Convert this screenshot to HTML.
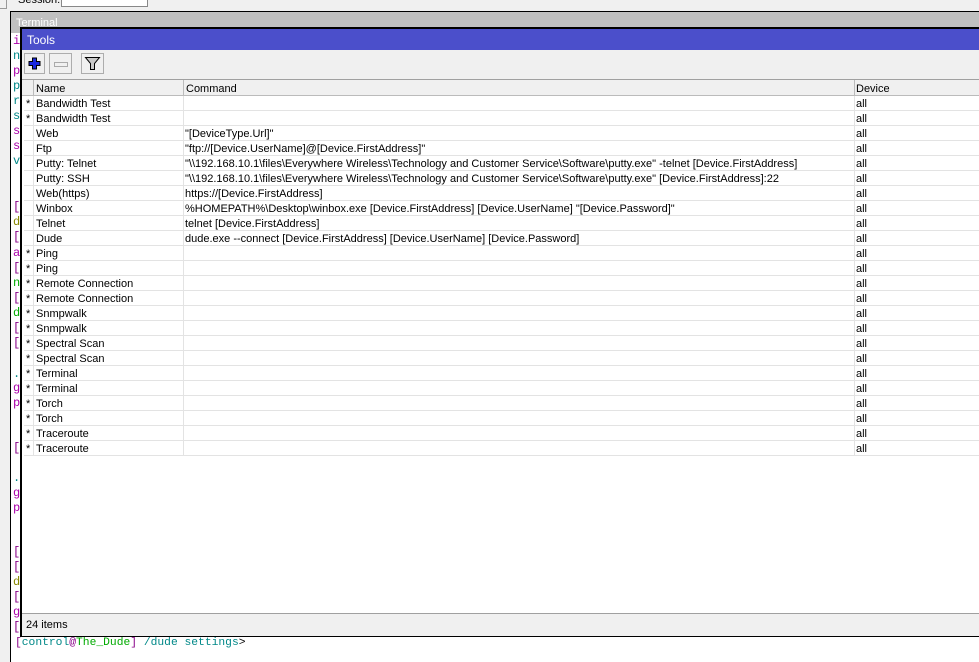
<!DOCTYPE html><html><head><style>
body{margin:0;width:979px;height:661px;overflow:hidden;background:#f0f0f0;font-family:"Liberation Sans",sans-serif;position:relative}
.a{position:absolute}
.t{font-family:"Liberation Mono",monospace;font-size:12px;position:absolute;left:13px;line-height:12px}
.row{position:absolute;left:24px;width:955px;height:15px;border-bottom:1px solid #e3e3e3;box-sizing:border-box;font-size:11px;line-height:16px;color:#000}
.row span{position:absolute;top:0;white-space:nowrap}
</style></head><body>
<div class="a" style="left:0;top:0;width:6px;height:8px;border:1px solid #999;border-top:0;border-left:0"></div>
<div class="a" style="left:18px;top:-6px;font-size:11px">Session:</div>
<div class="a" style="left:61px;top:-4px;width:85px;height:9px;border:1px solid #888;background:#fff"></div>
<div class="a" style="left:10px;top:11px;width:969px;height:650px;background:#fff;border-left:1px solid #000;border-top:1px solid #000"></div>
<div class="a" style="left:11px;top:12px;width:968px;height:21px;background:#c0c0c0;color:#fff;font-size:11px;line-height:22px;padding-left:5px">Terminal</div>
<div class="t" style="top:35px;color:#a0a">i</div>
<div class="t" style="top:50px;color:#088">n</div>
<div class="t" style="top:65px;color:#a0a">p</div>
<div class="t" style="top:80px;color:#088">p</div>
<div class="t" style="top:95px;color:#088">r</div>
<div class="t" style="top:110px;color:#088">s</div>
<div class="t" style="top:125px;color:#a0a">s</div>
<div class="t" style="top:140px;color:#a0a">s</div>
<div class="t" style="top:155px;color:#088">v</div>
<div class="t" style="top:201px;color:#808">[</div>
<div class="t" style="top:216px;color:#880">d</div>
<div class="t" style="top:231px;color:#808">[</div>
<div class="t" style="top:247px;color:#a0a">a</div>
<div class="t" style="top:262px;color:#808">[</div>
<div class="t" style="top:277px;color:#0a0">n</div>
<div class="t" style="top:292px;color:#808">[</div>
<div class="t" style="top:307px;color:#0a0">d</div>
<div class="t" style="top:322px;color:#808">[</div>
<div class="t" style="top:337px;color:#808">[</div>
<div class="t" style="top:368px;color:#088">.</div>
<div class="t" style="top:382px;color:#a0a">g</div>
<div class="t" style="top:397px;color:#a0a">p</div>
<div class="t" style="top:442px;color:#808">[</div>
<div class="t" style="top:472px;color:#088">.</div>
<div class="t" style="top:487px;color:#a0a">g</div>
<div class="t" style="top:502px;color:#a0a">p</div>
<div class="t" style="top:546px;color:#808">[</div>
<div class="t" style="top:561px;color:#808">[</div>
<div class="t" style="top:576px;color:#880">d</div>
<div class="t" style="top:591px;color:#808">[</div>
<div class="t" style="top:606px;color:#a0a">g</div>
<div class="t" style="top:621px;color:#808">[</div>
<div class="t" style="top:637px;left:15px;font-size:11.3px;white-space:pre"><span style="color:#808">[</span><span style="color:#088">control</span><span style="color:#808">@</span><span style="color:#0a0">The_Dude</span><span style="color:#808">]</span> <span style="color:#088">/dude settings</span>&gt;</div>
<div class="a" style="left:20px;top:27px;width:959px;height:610px;background:#fff;border-left:2px solid #000;border-top:2px solid #000;border-bottom:2px solid #000;box-sizing:border-box"></div>
<div class="a" style="left:22px;top:29px;width:957px;height:21px;background:#4b4fcb;color:#fff;font-size:12px;line-height:22px;padding-left:5px">Tools</div>
<div class="a" style="left:22px;top:50px;width:957px;height:29px;background:#f0f0f0;border-bottom:1px solid #a0a0a0"></div>
<div class="a" style="left:24px;top:53px;width:21px;height:21px;border:1px solid #adadad;background:#f0f0f0;box-sizing:border-box"><svg width="19" height="19" style="position:absolute;left:0;top:0"><path d="M9.5 3.5v12M3.5 9.5h12" stroke="#000" stroke-width="5"/><path d="M9.5 4.5v10M4.5 9.5h10" stroke="#1a28e0" stroke-width="3"/></svg></div>
<div class="a" style="left:49px;top:53px;width:23px;height:21px;border:1px solid #adadad;background:#f0f0f0;box-sizing:border-box"><div class="a" style="left:4px;top:8px;width:12px;height:3px;border:1px solid #aaa"></div></div>
<div class="a" style="left:81px;top:53px;width:23px;height:21px;border:1px solid #adadad;background:#f0f0f0;box-sizing:border-box"><svg width="21" height="19" class="a" style="left:0;top:0"><path d="M3.5 3.5h14l-5 6v6h-4v-6z" fill="#c8c8c8" stroke="#000"/></svg></div>
<div class="a" style="left:22px;top:80px;width:957px;height:16px;background:#f0f0f0;border-bottom:1px solid #bbb;box-sizing:border-box;font-size:11px;line-height:18px">
<div class="a" style="left:11px;top:0;height:16px;border-left:1px solid #bbb"></div>
<span class="a" style="left:14px">Name</span>
<div class="a" style="left:161px;top:0;height:16px;border-left:1px solid #bbb"></div>
<span class="a" style="left:164px">Command</span>
<div class="a" style="left:832px;top:0;height:16px;border-left:1px solid #bbb"></div>
<span class="a" style="left:834px">Device</span>
</div>
<div class="a" style="left:33px;top:96px;height:360px;border-left:1px solid #e3e3e3"></div>
<div class="a" style="left:183px;top:96px;height:360px;border-left:1px solid #e3e3e3"></div>
<div class="a" style="left:854px;top:96px;height:360px;border-left:1px solid #e3e3e3"></div>
<div class="row" style="top:96px"><span style="left:2px">*</span><span style="left:12px">Bandwidth Test</span><span style="left:832px">all</span></div>
<div class="row" style="top:111px"><span style="left:2px">*</span><span style="left:12px">Bandwidth Test</span><span style="left:832px">all</span></div>
<div class="row" style="top:126px"><span style="left:12px">Web</span><span style="left:161px">"[DeviceType.Url]"</span><span style="left:832px">all</span></div>
<div class="row" style="top:141px"><span style="left:12px">Ftp</span><span style="left:161px">"ftp://[Device.UserName]@[Device.FirstAddress]"</span><span style="left:832px">all</span></div>
<div class="row" style="top:156px"><span style="left:12px">Putty: Telnet</span><span style="left:161px">"\\192.168.10.1\files\Everywhere Wireless\Technology and Customer Service\Software\putty.exe" -telnet [Device.FirstAddress]</span><span style="left:832px">all</span></div>
<div class="row" style="top:171px"><span style="left:12px">Putty: SSH</span><span style="left:161px">"\\192.168.10.1\files\Everywhere Wireless\Technology and Customer Service\Software\putty.exe" [Device.FirstAddress]:22</span><span style="left:832px">all</span></div>
<div class="row" style="top:186px"><span style="left:12px">Web(https)</span><span style="left:161px">https://[Device.FirstAddress]</span><span style="left:832px">all</span></div>
<div class="row" style="top:201px"><span style="left:12px">Winbox</span><span style="left:161px">%HOMEPATH%\Desktop\winbox.exe [Device.FirstAddress] [Device.UserName] "[Device.Password]"</span><span style="left:832px">all</span></div>
<div class="row" style="top:216px"><span style="left:12px">Telnet</span><span style="left:161px">telnet [Device.FirstAddress]</span><span style="left:832px">all</span></div>
<div class="row" style="top:231px"><span style="left:12px">Dude</span><span style="left:161px">dude.exe --connect [Device.FirstAddress] [Device.UserName] [Device.Password]</span><span style="left:832px">all</span></div>
<div class="row" style="top:246px"><span style="left:2px">*</span><span style="left:12px">Ping</span><span style="left:832px">all</span></div>
<div class="row" style="top:261px"><span style="left:2px">*</span><span style="left:12px">Ping</span><span style="left:832px">all</span></div>
<div class="row" style="top:276px"><span style="left:2px">*</span><span style="left:12px">Remote Connection</span><span style="left:832px">all</span></div>
<div class="row" style="top:291px"><span style="left:2px">*</span><span style="left:12px">Remote Connection</span><span style="left:832px">all</span></div>
<div class="row" style="top:306px"><span style="left:2px">*</span><span style="left:12px">Snmpwalk</span><span style="left:832px">all</span></div>
<div class="row" style="top:321px"><span style="left:2px">*</span><span style="left:12px">Snmpwalk</span><span style="left:832px">all</span></div>
<div class="row" style="top:336px"><span style="left:2px">*</span><span style="left:12px">Spectral Scan</span><span style="left:832px">all</span></div>
<div class="row" style="top:351px"><span style="left:2px">*</span><span style="left:12px">Spectral Scan</span><span style="left:832px">all</span></div>
<div class="row" style="top:366px"><span style="left:2px">*</span><span style="left:12px">Terminal</span><span style="left:832px">all</span></div>
<div class="row" style="top:381px"><span style="left:2px">*</span><span style="left:12px">Terminal</span><span style="left:832px">all</span></div>
<div class="row" style="top:396px"><span style="left:2px">*</span><span style="left:12px">Torch</span><span style="left:832px">all</span></div>
<div class="row" style="top:411px"><span style="left:2px">*</span><span style="left:12px">Torch</span><span style="left:832px">all</span></div>
<div class="row" style="top:426px"><span style="left:2px">*</span><span style="left:12px">Traceroute</span><span style="left:832px">all</span></div>
<div class="row" style="top:441px"><span style="left:2px">*</span><span style="left:12px">Traceroute</span><span style="left:832px">all</span></div>
<div class="a" style="left:22px;top:613px;width:957px;height:22px;background:#f0f0f0;border-top:1px solid #a0a0a0;font-size:11px;line-height:22px;padding-left:4px">24 items</div>
</body></html>
